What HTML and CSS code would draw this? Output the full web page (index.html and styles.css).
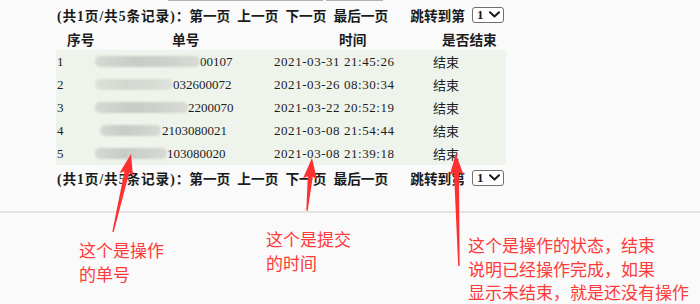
FILE: index.html
```html
<!DOCTYPE html>
<html lang="zh-CN">
<head>
<meta charset="utf-8">
<title>记录</title>
<link rel="stylesheet" href="styles.css">
</head>
<body>
<div class="screen">
  <div class="topline"><span class="seg seg-a"></span><span class="seg seg-b"></span></div>

  <div class="content">
    <div class="pager">
      <span class="summary">(共1页/共5条记录)：</span>
      <span class="plink">第一页</span>
      <span class="plink">上一页</span>
      <span class="plink">下一页</span>
      <span class="plink">最后一页</span>
      <span class="jump">跳转到第</span>
      <span class="pagesel" role="listbox"><span class="selval">1</span><svg class="chev" width="11" height="7" viewBox="0 0 11 7"><path d="M1 1.2 L5.5 5.5 L10 1.2"/></svg></span>
    </div>

    <div class="grid head">
      <div class="th th-idx">序号</div>
      <div class="th th-no">单号</div>
      <div class="th th-time">时间</div>
      <div class="th th-end">是否结束</div>
    </div>

    <div class="grid body">
      <div class="row">
        <div class="td idx">1</div>
        <div class="td no"><span class="blob" style="width:105px"></span><span class="num">00107</span></div>
        <div class="td time">2021-03-31 21:45:26</div>
        <div class="td end">结束</div>
      </div>
      <div class="row">
        <div class="td idx">2</div>
        <div class="td no"><span class="blob faint" style="width:78px"></span><span class="num">032600072</span></div>
        <div class="td time">2021-03-26 08:30:34</div>
        <div class="td end">结束</div>
      </div>
      <div class="row">
        <div class="td idx">3</div>
        <div class="td no"><span class="blob" style="width:93px"></span><span class="num">2200070</span></div>
        <div class="td time">2021-03-22 20:52:19</div>
        <div class="td end">结束</div>
      </div>
      <div class="row">
        <div class="td idx">4</div>
        <div class="td no"><span class="blob shift" style="width:61px"></span><span class="num">2103080021</span></div>
        <div class="td time">2021-03-08 21:54:44</div>
        <div class="td end">结束</div>
      </div>
      <div class="row">
        <div class="td idx">5</div>
        <div class="td no"><span class="blob" style="width:72px"></span><span class="num">103080020</span></div>
        <div class="td time">2021-03-08 21:39:18</div>
        <div class="td end">结束</div>
      </div>
    </div>

    <div class="pager pager-bottom">
      <span class="summary">(共1页/共5条记录)：</span>
      <span class="plink">第一页</span>
      <span class="plink">上一页</span>
      <span class="plink">下一页</span>
      <span class="plink">最后一页</span>
      <span class="jump">跳转到第</span>
      <span class="pagesel" role="listbox"><span class="selval">1</span><svg class="chev" width="11" height="7" viewBox="0 0 11 7"><path d="M1 1.2 L5.5 5.5 L10 1.2"/></svg></span>
    </div>
  </div>

  <div class="sep"></div>

  <svg class="arrows" width="700" height="304" viewBox="0 0 700 304" aria-hidden="true">
    <polygon transform="translate(131,154) rotate(13)" points="0,0 7,21 2.5,18.5 0.7,80 -0.7,80 -2.5,18.5 -7,21"/>
    <polygon transform="translate(312,158) rotate(5.4)" points="0,0 7,21 2.5,18.5 0.7,53 -0.7,53 -2.5,18.5 -7,21"/>
    <polygon transform="translate(456,154) rotate(-1.5)" points="0,0 7,21 2.5,18.5 0.7,112 -0.7,112 -2.5,18.5 -7,21"/>
  </svg>

  <div class="note note-1">这个是操作<br>的单号</div>
  <div class="note note-2">这个是提交<br>的时间</div>
  <div class="note note-3">这个是操作的状态，结束<br>说明已经操作完成，如果<br>显示未结束，就是还没有操作</div>
</div>
</body>
</html>
```

FILE: styles.css
```css
html, body {
  margin: 0;
  padding: 0;
  background: #fafafa;
}

.screen {
  position: relative;
  width: 700px;
  height: 304px;
  overflow: hidden;
  color: #1c1c1c;
  font-family: "Liberation Serif", "Noto Sans CJK SC", serif;
}

.topline {
  display: flex;
  gap: 3px;
  height: 1px;
  padding-left: 168px;
}
.seg {
  display: block;
  height: 1px;
  background: #b4b4b4;
}
.seg-a { width: 155px; }
.seg-b { width: 57px; }

.content {
  padding-left: 56px;
}

.pager {
  display: flex;
  align-items: center;
  height: 27px;
  gap: 7px;
  font-weight: bold;
  font-size: 13.7px;
  color: #1a1a1a;
  padding-left: 1px;
  white-space: nowrap;
}
.pager-bottom {
  height: 25px;
}
.summary {
  letter-spacing: 0.9px;
  margin-right: -8px;
}
.jump {
  margin-left: 15px;
}
.pagesel {
  margin-left: 0;
  box-sizing: border-box;
  width: 32px;
  height: 16px;
  display: flex;
  align-items: center;
  justify-content: space-between;
  padding: 0 3px 0 4px;
  background: #fff;
  border: 1px solid #707070;
  border-radius: 3px;
}
.selval {
  font: bold 13px "Liberation Serif", serif;
  line-height: 14px;
  color: #1a1a1a;
}
.chev path {
  fill: none;
  stroke: #1a1a1a;
  stroke-width: 2;
  stroke-linecap: round;
  stroke-linejoin: round;
}

.grid {
  width: 450px;
}
.head {
  display: grid;
  grid-template-columns: 38px 179px 159px 74px;
  height: 22px;
  align-items: center;
  font-weight: bold;
  font-size: 13.7px;
}
.th {
  white-space: nowrap;
}
.th-idx { padding-left: 11px; }
.th-no { padding-left: 78px; }
.th-time { padding-left: 66px; }
.th-end { padding-left: 10px; }

.body {
  background: #eef4eb;
}
.row {
  display: grid;
  grid-template-columns: 38px 179px 159px 74px;
  height: 23px;
  align-items: center;
  font-size: 13px;
}
.td {
  padding-left: 1px;
  white-space: nowrap;
}
.no {
  display: flex;
  align-items: center;
}
.blob {
  display: inline-block;
  height: 11px;
  border-radius: 5px;
  background: linear-gradient(90deg, #d6d9d3, #c9ccc6 40%, #cfd2cc 70%, #d8dbd5);
  filter: blur(1.2px);
}
.blob.faint {
  opacity: 0.7;
}
.blob.shift {
  margin-left: 5px;
  margin-right: 1px;
}
.time {
  letter-spacing: 0.55px;
}
.end {
  font-family: "Noto Sans CJK SC", sans-serif;
}

.sep {
  margin-top: 21px;
  height: 2px;
  background: #e4e4e4;
}

.arrows {
  position: absolute;
  left: 0;
  top: 0;
  pointer-events: none;
}
.arrows polygon {
  fill: #fd3131;
}

.note {
  position: absolute;
  font-family: "Noto Sans CJK SC", sans-serif;
  font-size: 17px;
  line-height: 23.5px;
  color: #fd3b3b;
  white-space: nowrap;
}
.note-1 { left: 79px; top: 238px; }
.note-2 { left: 266px; top: 227px; }
.note-3 { left: 468px; top: 233px; }
```
